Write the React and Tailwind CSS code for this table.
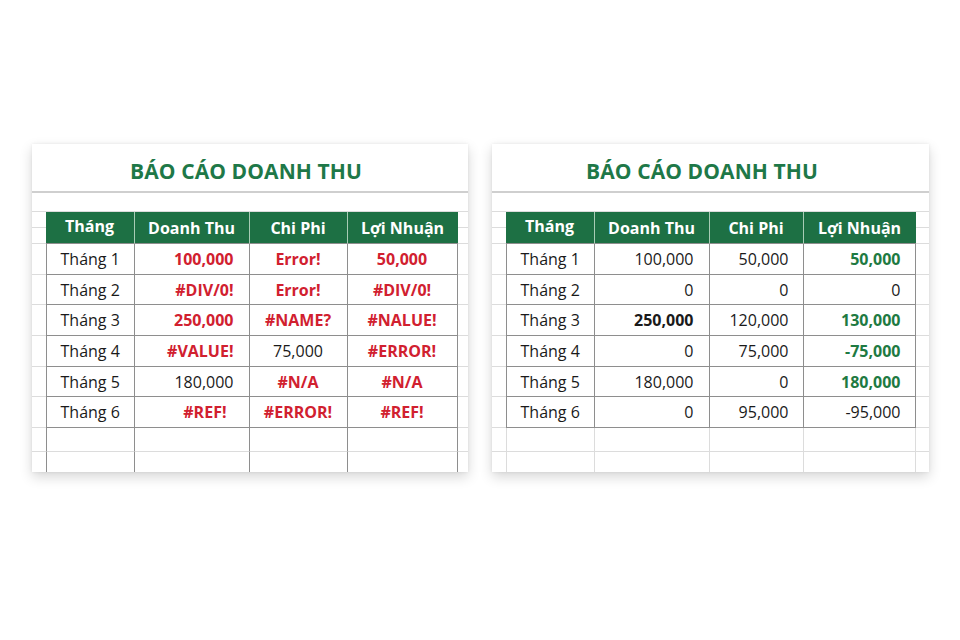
const font = { fontFamily: '"Open Sans", "Noto Sans", sans-serif' }

const leftRows = [
  ['Tháng 1', ['100,000', 'red'], ['Error!', 'red'], ['50,000', 'red']],
  ['Tháng 2', ['#DIV/0!', 'red'], ['Error!', 'red'], ['#DIV/0!', 'red']],
  ['Tháng 3', ['250,000', 'red'], ['#NAME?', 'red'], ['#NALUE!', 'red']],
  ['Tháng 4', ['#VALUE!', 'red'], ['75,000', 'plain'], ['#ERROR!', 'red']],
  ['Tháng 5', ['180,000', 'plain'], ['#N/A', 'red'], ['#N/A', 'red']],
  ['Tháng 6', ['#REF!', 'red', 'pr-[22px]'], ['#ERROR!', 'red'], ['#REF!', 'red']],
]

const rightRows = [
  ['Tháng 1', ['100,000', 'plain'], ['50,000', 'plain'], ['50,000', 'green']],
  ['Tháng 2', ['0', 'plain'], ['0', 'plain'], ['0', 'plain']],
  ['Tháng 3', ['250,000', 'bold'], ['120,000', 'plain'], ['130,000', 'green']],
  ['Tháng 4', ['0', 'plain'], ['75,000', 'plain'], ['-75,000', 'green']],
  ['Tháng 5', ['180,000', 'plain'], ['0', 'plain'], ['180,000', 'green']],
  ['Tháng 6', ['0', 'plain'], ['95,000', 'plain'], ['-95,000', 'plain']],
]

const tone = {
  red: 'text-[#d1202f] font-bold',
  green: 'text-[#1e7a42] font-bold',
  bold: 'text-[#1a1a1a] font-bold',
  plain: 'text-[#1a1a1a]',
}

function Panel({ rows, widths, aligns, margins, titleShift, darkTail }) {
  const tailLine = darkTail ? 'border-[#8e8e8e]' : 'border-[#dcdcdc]'
  const grid = 'border-[#dcdcdc]'
  const dark = 'border-[#8e8e8e]'

  return (
    <div className="w-full h-[328px] bg-white flex flex-col shadow-[0_5px_12px_rgba(0,0,0,0.16),0_0_3px_rgba(0,0,0,0.08)]">
      {/* Title */}
      <div className={`h-[49px] pt-[8px] flex items-center justify-center border-b-2 border-[#cfcfcf] ${titleShift}`}>
        <h2 className="text-[21px] font-bold text-[#1e7848] tracking-[0.1px]">BÁO CÁO DOANH THU</h2>
      </div>

      {/* Blank sheet row */}
      <div className={`h-[19px] border-b ${grid}`} />

      {/* Header */}
      <div className="flex h-[32px]">
        <div className={`flex flex-col ${margins[0]}`}>
          <div className={`flex-1 border-b ${grid}`} />
          <div className={`flex-1 border-b ${grid}`} />
        </div>
        {['Tháng', 'Doanh Thu', 'Chi Phi', 'Lợi Nhuận'].map((h, i) => (
          <div
            key={h}
            className={`${widths[i]} bg-[#1d7044] text-white font-bold text-[16px] flex items-center justify-center border-b ${dark} ${i < 3 ? 'border-r border-r-[#a8ccb5]' : ''} ${i === 0 ? 'pb-[3px]' : ''}`}
          >
            {h}
          </div>
        ))}
        <div className="flex-1 flex flex-col">
          <div className={`flex-1 border-b ${grid}`} />
          <div className={`flex-1 border-b ${grid}`} />
        </div>
      </div>

      {/* Data rows */}
      {rows.map((r) => (
        <div key={r[0]} className="flex h-[30.7px] text-[16px]">
          <div className={`${margins[0]} border-b ${grid}`} />
          <div className={`${widths[0]} border-l border-r border-b ${dark} pl-[14px] flex items-center text-[#1a1a1a]`}>
            {r[0]}
          </div>
          {r.slice(1).map((c, i) => (
            <div
              key={i}
              className={`${widths[i + 1]} border-r border-b ${dark} flex items-center ${aligns[i]} ${c[2] || ''} ${tone[c[1]]}`}
            >
              {c[0]}
            </div>
          ))}
          <div className={`flex-1 border-b ${grid}`} />
        </div>
      ))}

      {/* Empty sheet rows */}
      {['h-[24px]', 'flex-1'].map((h, k) => (
        <div key={k} className={`flex ${h}`}>
          <div className={`${margins[0]} ${k === 0 ? `border-b ${grid}` : ''}`} />
          {widths.map((w, i) => (
            <div
              key={i}
              className={`${w} border-r ${tailLine} ${i === 0 ? `border-l` : ''} ${k === 0 ? `border-b border-b-[#dcdcdc]` : ''}`}
            />
          ))}
          <div className={`flex-1 ${k === 0 ? `border-b ${grid}` : ''}`} />
        </div>
      ))}
    </div>
  )
}

export default function App() {
  return (
    <div className="min-h-screen w-full bg-white flex justify-center gap-[24px] pt-[144px]" style={font}>
      <div className="w-[436px]">
        <Panel
          rows={leftRows}
          widths={['w-[89px]', 'w-[115px]', 'w-[98px]', 'w-[110px]']}
          aligns={['justify-end pr-[15px]', 'justify-center', 'justify-center']}
          margins={['w-[14px]']}
          titleShift="pr-[7px]"
          darkTail
        />
      </div>
      <div className="w-[437px]">
        <Panel
          rows={rightRows}
          widths={['w-[89px]', 'w-[115px]', 'w-[94px]', 'w-[112px]']}
          aligns={['justify-end pr-[15px]', 'justify-end pr-[14px]', 'justify-end pr-[14px]']}
          margins={['w-[14px]']}
          titleShift="pr-[16px]"
        />
      </div>
    </div>
  )
}
